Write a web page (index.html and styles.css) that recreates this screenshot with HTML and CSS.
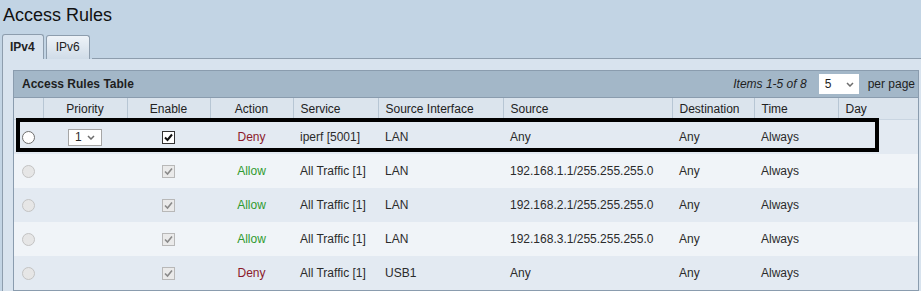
FILE: index.html
```html
<!DOCTYPE html>
<html lang="en">

<head>
    <meta charset="UTF-8">
    <title>Access Rules</title>
    <link rel="stylesheet" href="styles.css">
</head>

<body>

    <h1 class="page-title">Access Rules</h1>

    <div class="tabs">
        <div class="tab active">IPv4</div>
        <div class="tab">IPv6</div>
        <div class="tab-line"></div>
    </div>

    <div class="panel">
        <div class="grid">
            <div class="grid-title">
                <span>Access Rules Table</span>
                <div class="pager">
                    <em>Items 1-5 of 8</em>
                    <div class="dropdown pager-select">5
                        <svg width="8" height="5" viewBox="0 0 8 5"><path d="M1 1 L4 4 L7 1" fill="none" stroke="#6d6d6d" stroke-width="1.5"/></svg>
                    </div>
                    <span>per page</span>
                </div>
            </div>

            <table class="rules">
                <colgroup>
                    <col style="width: 29px">
                    <col style="width: 84px">
                    <col style="width: 83px">
                    <col style="width: 83px">
                    <col style="width: 85px">
                    <col style="width: 125px">
                    <col style="width: 169px">
                    <col style="width: 82px">
                    <col style="width: 84px">
                    <col style="width: 80px">
                </colgroup>
                <thead>
                    <tr>
                        <th></th>
                        <th class="center">Priority</th>
                        <th class="center">Enable</th>
                        <th class="center">Action</th>
                        <th>Service</th>
                        <th>Source Interface</th>
                        <th>Source</th>
                        <th>Destination</th>
                        <th>Time</th>
                        <th>Day</th>
                    </tr>
                </thead>
                <tbody>
                    <tr>
                        <td><span class="radio"></span></td>
                        <td class="center">
                            <div class="dropdown prio-select">1
                                <svg width="8" height="5" viewBox="0 0 8 5"><path d="M1 1 L4 4 L7 1" fill="none" stroke="#6d6d6d" stroke-width="1.5"/></svg>
                            </div>
                        </td>
                        <td class="center"><span class="check"><svg width="11" height="11" viewBox="0 0 11 11"><path d="M2 5.5 L4.5 8 L9 2.5" fill="none" stroke="#111" stroke-width="2"/></svg></span></td>
                        <td class="center deny">Deny</td>
                        <td>iperf [5001]</td>
                        <td>LAN</td>
                        <td>Any</td>
                        <td>Any</td>
                        <td>Always</td>
                        <td></td>
                    </tr>
                    <tr>
                        <td><span class="radio off"></span></td>
                        <td></td>
                        <td class="center"><span class="check off"><svg width="11" height="11" viewBox="0 0 11 11"><path d="M2 5.5 L4.5 8 L9 2.5" fill="none" stroke="#8a8a8a" stroke-width="1.6"/></svg></span></td>
                        <td class="center allow">Allow</td>
                        <td>All Traffic [1]</td>
                        <td>LAN</td>
                        <td>192.168.1.1/255.255.255.0</td>
                        <td>Any</td>
                        <td>Always</td>
                        <td></td>
                    </tr>
                    <tr>
                        <td><span class="radio off"></span></td>
                        <td></td>
                        <td class="center"><span class="check off"><svg width="11" height="11" viewBox="0 0 11 11"><path d="M2 5.5 L4.5 8 L9 2.5" fill="none" stroke="#8a8a8a" stroke-width="1.6"/></svg></span></td>
                        <td class="center allow">Allow</td>
                        <td>All Traffic [1]</td>
                        <td>LAN</td>
                        <td>192.168.2.1/255.255.255.0</td>
                        <td>Any</td>
                        <td>Always</td>
                        <td></td>
                    </tr>
                    <tr>
                        <td><span class="radio off"></span></td>
                        <td></td>
                        <td class="center"><span class="check off"><svg width="11" height="11" viewBox="0 0 11 11"><path d="M2 5.5 L4.5 8 L9 2.5" fill="none" stroke="#8a8a8a" stroke-width="1.6"/></svg></span></td>
                        <td class="center allow">Allow</td>
                        <td>All Traffic [1]</td>
                        <td>LAN</td>
                        <td>192.168.3.1/255.255.255.0</td>
                        <td>Any</td>
                        <td>Always</td>
                        <td></td>
                    </tr>
                    <tr>
                        <td><span class="radio off"></span></td>
                        <td></td>
                        <td class="center"><span class="check off"><svg width="11" height="11" viewBox="0 0 11 11"><path d="M2 5.5 L4.5 8 L9 2.5" fill="none" stroke="#8a8a8a" stroke-width="1.6"/></svg></span></td>
                        <td class="center deny">Deny</td>
                        <td>All Traffic [1]</td>
                        <td>USB1</td>
                        <td>Any</td>
                        <td>Any</td>
                        <td>Always</td>
                        <td></td>
                    </tr>
                </tbody>
            </table>

            <!-- annotation box round the first rule -->
            <div class="highlight"></div>
        </div>
    </div>

</body>

</html>
```

FILE: styles.css
```css
body {
    margin: 0;
    font-family: "Liberation Sans", Arial, sans-serif;
    font-size: 12px;
    color: #2b2b2b;
    background-color: #c2d4e4;
    overflow: hidden;
}

.page-title {
    margin: 5px 0 0 3px;
    font-size: 18px;
    font-weight: normal;
    line-height: 20px;
    color: #111;
}

.tabs {
    display: flex;
    align-items: flex-end;
    margin-top: 9px;
    margin-left: 2px;
    height: 25px;
}

.tab {
    height: 23px;
    padding: 0 9px;
    line-height: 22px;
    border: 1px solid #8d9dad;
    border-bottom: none;
    border-radius: 3px 3px 0 0;
    background: linear-gradient(#eef3f8, #d0dce8);
    color: #222;
    margin-right: 2px;
}

.tab.active {
    height: 24px;
    padding: 0 8px 0 7px;
    font-weight: bold;
    background: #d8e3ee;
    line-height: 24px;
}

.tab-line {
    flex: 1;
    border-bottom: 1px solid #8d9dad;
}

.panel {
    margin-left: 2px;
    border-left: 1px solid #8d9dad;
    background-color: #d8e3ee;
    padding: 11px 2px 4px 10px;
}

.grid {
    position: relative;
    border: 1px solid #8a9cae;
    background-color: #e3eaf2;
}

.grid-title {
    display: flex;
    justify-content: space-between;
    align-items: center;
    height: 26px;
    padding: 0 3px 0 8px;
    background-color: #a3b7c8;
    border-bottom: 1px solid #8a9cae;
    font-weight: bold;
    color: #1e1e1e;
}

.pager {
    display: flex;
    align-items: center;
    font-weight: normal;
}

.pager em {
    margin-right: 12px;
}

.dropdown {
    display: flex;
    align-items: center;
    justify-content: space-between;
    background-color: #fff;
    box-sizing: border-box;
}

.pager-select {
    width: 40px;
    height: 20px;
    padding: 0 5px 0 6px;
    margin-right: 9px;
}

.prio-select {
    width: 34px;
    height: 17px;
    margin: 0 auto;
    padding: 0 6px 0 6px;
    border: 1px solid #a6a6a6;
}

.rules {
    width: 100%;
    border-collapse: collapse;
    table-layout: fixed;
}

.rules th {
    height: 21px;
    padding: 0 7px;
    font-weight: normal;
    text-align: left;
    background-color: #dbe4ed;
    border-left: 1px solid #b7c6d4;
    border-bottom: 1px solid #c9d5e1;
    color: #222;
}

.rules th:first-child {
    border-left: none;
}

.rules td {
    height: 34px;
    padding: 0 7px;
    white-space: nowrap;
}

.rules tbody tr:nth-child(even) td {
    background-color: #f0f4f8;
}

.rules .center {
    text-align: center;
}

.deny {
    color: #8b1a2b;
}

.allow {
    color: #2f9a2f;
}

.radio {
    display: block;
    width: 11px;
    height: 11px;
    margin-left: 1px;
    border: 1px solid #6f6f6f;
    border-radius: 50%;
    background-color: #fff;
}

.radio.off {
    border-color: #c3c3c3;
    background-color: #e6e6e6;
}

.check {
    display: inline-flex;
    align-items: center;
    justify-content: center;
    width: 11px;
    height: 11px;
    border: 1px solid #333;
    background-color: #fff;
    vertical-align: middle;
}

.check.off {
    border-color: #b8b8b8;
    background-color: #eaeaea;
}

.highlight {
    position: absolute;
    top: 47px;
    left: 2px;
    width: 855px;
    height: 26px;
    border: 4px solid #000;
}
```
